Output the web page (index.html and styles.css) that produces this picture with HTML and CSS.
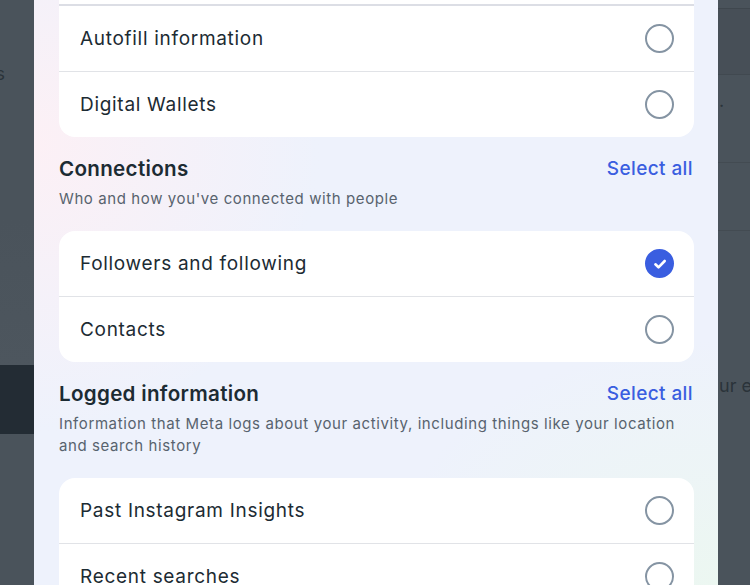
FILE: index.html
```html
<!DOCTYPE html>
<html lang="en">
<head>
<meta charset="utf-8">
<title>Download your information</title>
<link rel="stylesheet" href="styles.css">
</head>
<body>
<div class="page">
  <div class="gutter gutter-left">
    <div class="gl-top"><span class="ghost">Settings</span></div>
    <div class="gl-dark"></div>
    <div class="gl-bottom"></div>
  </div>

  <div class="modal">
    <div class="card card-cut">
      <div class="row">
        <span class="label">Autofill information</span>
        <span class="radio"></span>
      </div>
      <div class="row">
        <span class="label">Digital Wallets</span>
        <span class="radio"></span>
      </div>
    </div>

    <div class="section-head">
      <div class="title-line">
        <h2 class="title">Connections</h2>
        <span class="select-all">Select all</span>
      </div>
      <p class="desc">Who and how you've connected with people</p>
    </div>
    <div class="card">
      <div class="row">
        <span class="label">Followers and following</span>
        <span class="radio checked">
          <svg viewBox="0 0 16 16" width="16" height="16"><path d="M3.4 8.3l3.1 3 6.2-6.3" fill="none" stroke="#fff" stroke-width="2.6" stroke-linecap="round" stroke-linejoin="round"/></svg>
        </span>
      </div>
      <div class="row">
        <span class="label">Contacts</span>
        <span class="radio"></span>
      </div>
    </div>

    <div class="section-head">
      <div class="title-line">
        <h2 class="title">Logged information</h2>
        <span class="select-all">Select all</span>
      </div>
      <p class="desc">Information that Meta logs about your activity, including things like your location and search history</p>
    </div>
    <div class="card">
      <div class="row">
        <span class="label">Past Instagram Insights</span>
        <span class="radio"></span>
      </div>
      <div class="row">
        <span class="label">Recent searches</span>
        <span class="radio"></span>
      </div>
    </div>
  </div>

  <div class="gutter gutter-right">
    <div class="gr-a"></div>
    <div class="gr-b"></div>
    <div class="gr-c"><span class="dot">.</span></div>
    <div class="gr-d"></div>
    <div class="gr-e"><span class="ghost-r">ur experience</span></div>
  </div>
</div>
</body>
</html>
```

FILE: styles.css
```css
* { box-sizing: border-box; }
html, body {
  margin: 0;
  padding: 0;
  height: 100%;
  overflow: hidden;
}
body {
  background: #4a535b;
  font-family: Inter, "Noto Sans", "Liberation Sans", sans-serif;
  color: #1c2b33;
}
.page {
  display: flex;
  height: 585px;
  width: 750px;
}
.gutter {
  flex: 0 0 auto;
  display: flex;
  flex-direction: column;
  overflow: hidden;
}
.gutter-left { width: 34px; }
.gl-top {
  height: 365px;
  display: flex;
  justify-content: flex-end;
  padding-top: 62px;
  padding-right: 29px;
  white-space: nowrap;
  background: linear-gradient(#4a535b 60%, #4d565e);
}
.ghost {
  font-size: 18px;
  color: #2b333a;
  line-height: 24px;
  height: 24px;
}
.gl-dark {
  height: 69px;
  background: #232c34;
}
.gl-bottom { flex: 1; }

.gutter-right { width: 32px; }
.gr-a { height: 9px; border-bottom: 1px solid #3f474e; }
.gr-b {
  height: 66px;
  background: #474f57;
  border-bottom: 1px solid #414950;
}
.gr-c {
  height: 88px;
  padding-top: 14px;
  border-bottom: 1px solid #434b52;
}
.dot { color: #2b333a; font-size: 18px; line-height: 24px; margin-left: 1px; }
.gr-d { height: 68px; border-bottom: 1px solid #434b52; }
.gr-e {
  flex: 1;
  padding-top: 143px;
  white-space: nowrap;
}
.ghost-r {
  font-size: 18px;
  line-height: 24px;
  color: #2b333a;
  margin-left: 1px;
}

.modal {
  flex: 0 0 684px;
  width: 684px;
  padding: 0 24px 0 25px;
  background:
    radial-gradient(ellipse 60% 70% at 0% 25%, rgba(253, 240, 245, 0.95), rgba(253, 240, 245, 0) 70%),
    radial-gradient(ellipse 70% 60% at 100% 100%, rgba(236, 247, 241, 1), rgba(236, 247, 241, 0) 70%),
    #eef2fc;
  overflow: hidden;
}

.card {
  background: #fff;
  border-radius: 16px;
  overflow: hidden;
}
.card-cut {
  border-radius: 0 0 16px 16px;
  padding-top: 4px;
}
.card-cut::before {
  content: "";
  display: block;
  height: 2px;
  background: #dcdee5;
}
.row {
  display: flex;
  align-items: center;
  justify-content: space-between;
  height: 66px;
  padding: 0 20px 0 21px;
  border-bottom: 1px solid #e1e3e7;
}
.row:last-child { border-bottom: 0; height: 65px; }
.label {
  font-size: 19px;
  letter-spacing: 0.7px;
  color: #1c2b33;
}
.radio {
  flex: 0 0 auto;
  width: 29px;
  height: 29px;
  border-radius: 50%;
  border: 2px solid #8594a3;
  display: flex;
  align-items: center;
  justify-content: center;
}
.radio.checked {
  background: #3a5ee0;
  border-color: #3a5ee0;
}

.section-head {
  padding-top: 19px;
  padding-bottom: 21px;
}
.title-line {
  display: flex;
  align-items: center;
  justify-content: space-between;
}
.title {
  margin: 0;
  font-size: 20.6px;
  line-height: 25px;
  font-weight: 600;
  letter-spacing: 0.3px;
  color: #1c2b33;
}
.select-all {
  font-size: 19px;
  font-weight: 500;
  letter-spacing: 0.4px;
  color: #3a5ee0;
  line-height: 25px;
  margin-right: 1px;
}
.desc {
  margin: 7px 0 0;
  font-size: 15px;
  line-height: 22px;
  letter-spacing: 0.6px;
  color: #58636e;
}
```
